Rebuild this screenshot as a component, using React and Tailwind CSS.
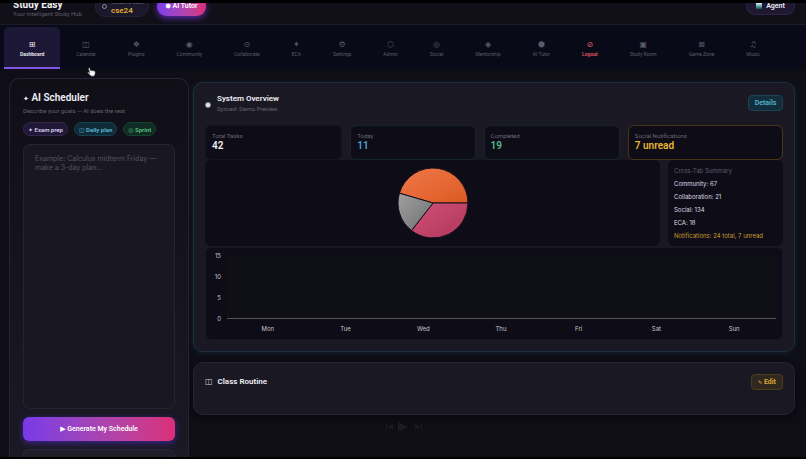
import { useState } from 'react';

const tabs = [
  { icon: '⊞', label: 'Dashboard' },
  { icon: '◫', label: 'Calendar' },
  { icon: '❖', label: 'Plugins' },
  { icon: '◉', label: 'Community' },
  { icon: '⊙', label: 'Collaborate' },
  { icon: '✦', label: 'ECA' },
  { icon: '⚙', label: 'Settings' },
  { icon: '⬡', label: 'Admin' },
  { icon: '◎', label: 'Social' },
  { icon: '◈', label: 'Mentorship' },
  { icon: '⬢', label: 'AI Tutor' },
  { icon: '⊘', label: 'Logout' },
  { icon: '▣', label: 'Study Room' },
  { icon: '⊠', label: 'Game Zone' },
  { icon: '♫', label: 'Music' },
];

const stats = [
  { label: 'Total Tasks', value: '42', border: 'border-[#151320]', color: 'text-[#f1f0f5]' },
  { label: 'Today', value: '11', border: 'border-[#14242f]', color: 'text-[#4ba3d8]' },
  { label: 'Completed', value: '19', border: 'border-[#14242a]', color: 'text-[#4fc08d]' },
  { label: 'Social Notifications', value: '7 unread', border: 'border-[#473616]', color: 'text-[#e8b634]' },
];

const summary = ['Community: 67', 'Collaboration: 21', 'Social: 134', 'ECA: 18'];

const days = ['Mon', 'Tue', 'Wed', 'Thu', 'Fri', 'Sat', 'Sun'];

const Icon = ({ children }) => (
  <span aria-hidden="true" className="font-['DejaVu_Sans',sans-serif] font-normal">
    {children}
  </span>
);

const Header = () => (
  <header className="flex h-[22px] shrink-0 items-end overflow-hidden border-b border-[#1c1b26] bg-[#111018] pr-[11px] pl-[13px]">
    <div className="w-[82px] pb-[6px]">
      <h1 className="text-[10px] leading-[11px] font-bold text-[#f1f0f5]">Study Easy</h1>
      <p className="text-[6px] leading-[8px] whitespace-nowrap text-[#5f5d6b]">Your Intelligent Study Hub</p>
    </div>
    <div className="mb-[7px] flex h-[25px] w-[54px] items-center gap-1 rounded-[10px] border border-[#252036] bg-[#1c182b] pl-[6px]">
      <span className="mt-[4px] size-[5px] shrink-0 rounded-full border border-[#8f8c9d]"></span>
      <div className="pt-[5px]">
        <p className="text-[5px] leading-[7px] whitespace-nowrap text-[#77748a]">Welcome back</p>
        <p className="text-[8px] leading-[9px] font-semibold text-[#e0ad35]">cse24</p>
      </div>
    </div>
    <button className="mb-[8px] ml-[8px] h-[19px] w-[49px] rounded-[9px] bg-gradient-to-r from-[#7c3aed] to-[#db2d77] text-[7px] font-semibold whitespace-nowrap text-white shadow-[0_2px_6px_#5b2bb0]">
      <span className="text-[6px]">
        <Icon>⬢</Icon>
      </span>{' '}
      AI Tutor
    </button>
    <button className="mb-[9px] ml-auto flex h-[18px] w-[49px] items-center justify-center gap-1 rounded-[9px] border border-[#2f2547] bg-[#1e1830] text-[7px] font-semibold text-[#eceaf2]">
      <span className="h-[6px] w-[6px] bg-gradient-to-b from-[#dff5f7] via-[#63a7ab] to-[#1c4d57]"></span>
      Agent
    </button>
  </header>
);

const Nav = ({ active, onSelect }) => (
  <nav className="flex h-[44px] shrink-0 bg-[#080a17] px-1 pt-[2px]">
    {tabs.map(({ icon, label }) => {
      const tone =
        active === label
          ? 'rounded-t-[5px] border-[#8055e8] bg-[#1c1735] font-semibold text-[#f1f0f5]'
          : label === 'Logout'
            ? 'border-transparent font-semibold text-[#e25a62]'
            : 'border-transparent text-[#5c5b69]';
      return (
        <button
          key={label}
          onClick={() => onSelect(label)}
          className={`flex shrink-0 flex-col items-center justify-center border-b-2 px-4 pt-[3px] whitespace-nowrap ${tone}`}
        >
          <span className="text-[8px] leading-[10px]">
            <Icon>{icon}</Icon>
          </span>
          <span className="text-[5px] leading-[8px]">{label}</span>
        </button>
      );
    })}
  </nav>
);

const Scheduler = () => (
  <aside className="w-[180px] shrink-0 rounded-t-[10px] border border-b-0 border-[#252335] bg-gradient-to-b from-[#100f18] to-[#1a1924] px-[13px] pt-3">
    <h2 className="text-[10px] leading-[13px] font-semibold text-[#f1f0f5]">
      <span className="text-[7px]">
        <Icon>✦</Icon>
      </span>{' '}
      AI Scheduler
    </h2>
    <p className="text-[6px] leading-[9px] text-[#66646f]">Describe your goals — AI does the rest</p>
    <div className="mt-[7px] flex gap-[6px] text-[6px] font-semibold">
      <button className="h-[14px] rounded-full border border-[#33264f] bg-[#211838] px-1 text-[#d9d0f0]">
        <Icon>✦</Icon> Exam prep
      </button>
      <button className="h-[14px] rounded-full border border-[#154050] bg-[#0f2b38] px-1 text-[#5bbdd6]">
        <Icon>◫</Icon> Daily plan
      </button>
      <button className="h-[14px] rounded-full border border-[#174330] bg-[#112c24] px-1 text-[#58c483]">
        <Icon>◎</Icon> Sprint
      </button>
    </div>
    <textarea
      aria-label="Study goals"
      placeholder="Example: Calculus midterm Friday — make a 3-day plan..."
      className="mt-[8px] block h-[265px] w-full resize-none rounded-[7px] border border-[#252335] bg-[#191822] px-[11px] py-[9px] font-['Inter',sans-serif] text-[7px] leading-[9px] text-[#d6d4df] placeholder:text-[#55535f]"
    ></textarea>
    <button className="mt-[8px] h-[24px] w-full rounded-[6px] bg-gradient-to-r from-[#7838e8] to-[#db2d77] text-[7px] font-semibold text-white shadow-[0_2px_6px_#3f2590]">
      <Icon>▶</Icon> Generate My Schedule
    </button>
    <div className="mt-[8px] h-[24px] rounded-[6px] border border-[#2a2838] bg-[#1e1d28]"></div>
  </aside>
);

const Pie = () => (
  <svg viewBox="-36 -36 72 72" className="size-[72px]" role="img" aria-label="Task breakdown">
    <defs>
      <linearGradient id="orange" x1="0" y1="0" x2="1" y2="1">
        <stop offset="0" stopColor="#f0784a" />
        <stop offset="1" stopColor="#dc5a22" />
      </linearGradient>
      <linearGradient id="pink" x1="0" y1="0" x2="1" y2="1">
        <stop offset="0" stopColor="#d0507a" />
        <stop offset="1" stopColor="#b03659" />
      </linearGradient>
      <linearGradient id="gray" x1="0" y1="0" x2="1" y2="1">
        <stop offset="0" stopColor="#a0a0a0" />
        <stop offset="1" stopColor="#707070" />
      </linearGradient>
    </defs>
    <g stroke="#16101a" strokeWidth="1" strokeLinejoin="round">
      <path d="M0 0L-33.6-9.8A35 35 0 0 1 35 0Z" fill="url(#orange)" />
      <path d="M0 0L35 0A35 35 0 0 1-21.5 27.6Z" fill="url(#pink)" />
      <path d="M0 0L-21.5 27.6A35 35 0 0 1-33.6-9.8Z" fill="url(#gray)" />
    </g>
  </svg>
);

const WeekChart = () => (
  <div className="mt-px flex h-[93px] gap-[6px] rounded-[6px] border border-[#171522] bg-[#0e0c16] py-[3px] pr-[6px] pl-[8px] font-['Inter',sans-serif] text-[6px] text-[#c9c7d2]">
    <div className="flex h-[73px] w-[7px] flex-col justify-between text-right leading-[10px]">
      <span>15</span>
      <span>10</span>
      <span>5</span>
      <span>0</span>
    </div>
    <div className="flex-1 pt-[5px]">
      <div className="h-[63px] border-b border-[#55545a] bg-[#0f0f16]"></div>
      <div className="grid grid-cols-7 pt-[5px] pr-[3px] pl-[2px] text-center leading-[10px]">
        {days.map((day) => (
          <span key={day}>{day}</span>
        ))}
      </div>
    </div>
  </div>
);

const Overview = () => (
  <section className="rounded-[10px] border border-[#1b303f] bg-[#1a1923] px-[11px] pt-3 pb-[11px] shadow-[0_1px_5px_#10242f]">
    <div className="flex h-[16px] items-center gap-[6px]">
      <span className="mt-[4px] size-[6px] rounded-full border border-[#8b8994] bg-[#e5e4ea]"></span>
      <div className="flex-1">
        <h2 className="text-[8px] leading-[10px] font-semibold text-[#f1f0f5]">System Overview</h2>
        <p className="text-[6px] leading-[9px] text-[#66646f]">Synced: Demo Preview</p>
      </div>
      <button className="h-[16px] w-[35px] rounded-[4px] border border-[#1c4253] bg-[#122d3b] text-[7px] font-semibold text-[#54b4cf]">
        Details
      </button>
    </div>

    <div className="mt-[14px] grid grid-cols-[138fr_126fr_137fr_156fr] gap-2">
      {stats.map(({ label, value, border, color }) => (
        <div key={label} className={`h-[35px] rounded-[6px] border bg-[#0e0c16] px-[6px] pt-[6px] ${border}`}>
          <p className="text-[6px] leading-[8px] text-[#6b6977]">{label}</p>
          <p className={`text-[10px] leading-[12px] font-semibold ${color}`}>{value}</p>
        </div>
      ))}
    </div>

    <div className="flex gap-2">
      <div className="flex h-[86px] flex-1 items-center justify-center rounded-[6px] bg-[#0e0c16]">
        <Pie />
      </div>
      <div className="w-[115px] rounded-[6px] bg-[#0e0c16] px-[6px] pt-[4px] font-['Inter',sans-serif] text-[6px] leading-[13px] text-[#dcdae3]">
        <h3 className="text-[#5f5d6b]">Cross-Tab Summary</h3>
        {summary.map((line) => (
          <p key={line}>{line}</p>
        ))}
        <p className="whitespace-nowrap text-[#c99d33]">Notifications: 24 total, 7 unread</p>
      </div>
    </div>

    <WeekChart />
  </section>
);

const Routine = () => (
  <section className="mt-[10px] flex h-[53px] items-start gap-[5px] rounded-[10px] border border-[#252335] bg-[#1a1923] px-[11px] pt-[11px] shadow-[0_3px_6px_#08080d]">
    <span className="text-[8px] leading-[16px] text-[#c9c7d2]">
      <Icon>◫</Icon>
    </span>
    <h2 className="flex-1 text-[8px] leading-[16px] font-semibold text-[#f1f0f5]">Class Routine</h2>
    <button className="h-[16px] w-[32px] rounded-[4px] border border-[#4a3c1d] bg-[#30281f] text-[7px] font-semibold text-[#e0ad35]">
      <span className="text-[5px]">
        <Icon>✎</Icon>
      </span>{' '}
      Edit
    </button>
  </section>
);

// idle player, faded almost into the background
const Player = () => (
  <div aria-hidden="true" className="mx-auto w-[220px] pt-[6px] text-[#1b1b21]">
    <svg viewBox="0 0 40 12" className="h-[12px] w-[40px]" fill="currentColor">
      <path d="M2 3h1v6H2zM9 3v6L4 6zM14 1l10 5-10 5zM31 3v6l5-3zM37 3h1v6h-1z" />
    </svg>
  </div>
);

// hand pointer resting under the Calendar tab
const Pointer = () => (
  <svg viewBox="0 0 16 18" className="absolute top-[64px] left-[87px] h-[10px] w-[9px]" aria-hidden="true">
    <path
      d="M3 1.5c1-.8 2 0 2.2 1L6 6l6 .8c2 .4 2.8 1.4 2.8 3.2 0 3-.8 6-3 6.500H7.500C5.500 16 4 13 1.500 11c-1-1 .3-2.300 1.500-1.600L4.500 10.500 2.500 3Z"
      fill="#f4f4f6"
      stroke="#22222a"
      strokeWidth="1"
    />
  </svg>
);

const App = () => {
  const [active, setActive] = useState('Dashboard');

  return (
    <div className="relative flex h-screen flex-col overflow-hidden border-t-[3px] border-b-2 border-black bg-[#0f0e16] font-['Roboto',sans-serif]">
      <Header />
      <Nav active={active} onSelect={setActive} />
      <main className="flex min-h-0 flex-1 gap-1 overflow-hidden pt-[9px] pr-[11px] pl-[9px]">
        <Scheduler />
        <div className="min-w-0 flex-1 pt-1">
          <Overview />
          <Routine />
          <Player />
        </div>
      </main>
      <Pointer />
    </div>
  );
};

export default App;
